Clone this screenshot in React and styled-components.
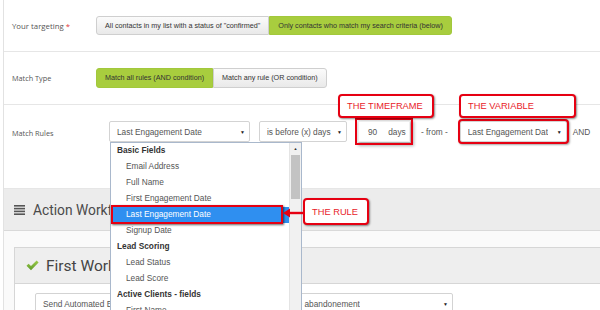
import styled, { createGlobalStyle } from 'styled-components';

const GlobalStyle = createGlobalStyle`
    html, body {
        margin: 0;
        padding: 0;
        background: #ffffff;
        font-family: 'Liberation Sans', Arial, sans-serif;
    }
`;

const basicFields = ['Email Address', 'Full Name', 'First Engagement Date', 'Last Engagement Date', 'Signup Date'];

function MenuIcon() {
    return (
        <svg width="11" height="10" viewBox="0 0 11 10">
            <rect x="0" y="0" width="11" height="1.6" fill="#555" />
            <rect x="0" y="2.8" width="11" height="1.6" fill="#555" />
            <rect x="0" y="5.6" width="11" height="1.6" fill="#555" />
            <rect x="0" y="8.4" width="11" height="1.6" fill="#555" />
        </svg>
    );
}

function CheckIcon() {
    return (
        <svg width="13" height="11" viewBox="0 0 13 11">
            <defs>
                <linearGradient id="chk" x1="0" y1="0" x2="0" y2="1">
                    <stop offset="0" stopColor="#9ccc4a" />
                    <stop offset="1" stopColor="#5f9a2a" />
                </linearGradient>
            </defs>
            <path d="M0.5 5.8 L2.6 3.8 L5 6.1 L10.6 0.6 L12.6 2.6 L5 10.2 Z" fill="url(#chk)" />
        </svg>
    );
}

function App() {
    return (
        <Screen>
            <GlobalStyle />
            <Content>
                <Row $h={52}>
                    <Label $w={84} $fs={7.8}>Your targeting <Req>*</Req></Label>
                    <Segmented>
                        <SegButton>All contacts in my list with a status of "confirmed"</SegButton>
                        <SegButton $active>Only contacts who match my search criteria (below)</SegButton>
                    </Segmented>
                </Row>

                <Row $h={53}>
                    <Label $w={84}>Match Type</Label>
                    <Segmented>
                        <SegButton $active $h={20}>Match all rules (AND condition)</SegButton>
                        <SegButton $h={20}>Match any rule (OR condition)</SegButton>
                    </Segmented>
                </Row>

                <Row $h={84} $top>
                    <Label $w={97} $pt={7}>Match Rules</Label>
                    <Select $w={141}>
                        <span>Last Engagement Date</span>
                        <Caret>▼</Caret>
                    </Select>
                    <Select $w={88} $ml={9}>
                        <span>is before (x) days</span>
                        <Caret>▼</Caret>
                    </Select>
                    <NumberBox>
                        <span>90</span>
                        <span>days</span>
                    </NumberBox>
                    <Joiner>- from -</Joiner>
                    <Select $w={107} $ml={12} $marked>
                        <span>Last Engagement Dat</span>
                        <Caret>▼</Caret>
                    </Select>
                    <Joiner $ml={6}>AND</Joiner>
                </Row>

                <SectionHead>
                    <MenuIcon />
                    <span>Action Workflows</span>
                </SectionHead>

                <PanelArea>
                    <Panel>
                        <PanelHead>
                            <CheckIcon />
                            <span>First Workflow</span>
                        </PanelHead>
                        <PanelBody>
                            <Select $w={418}>
                                <span>Send Automated Email: remind the visitor of his shopping cart after the abandonement</span>
                                <Caret>▼</Caret>
                            </Select>
                        </PanelBody>
                    </Panel>
                </PanelArea>
            </Content>

            <Dropdown>
                <Group>Basic Fields</Group>
                {basicFields.map((f) => (
                    <Option key={f} $selected={f === 'Last Engagement Date'}>{f}</Option>
                ))}
                <Group>Lead Scoring</Group>
                <Option>Lead Status</Option>
                <Option>Lead Score</Option>
                <Group>Active Clients - fields</Group>
                <Option>First Name</Option>
                <Scrollbar>
                    <ScrollArrow>▲</ScrollArrow>
                    <Thumb />
                </Scrollbar>
            </Dropdown>

            <Callout $x={338} $y={94} $w={96}>THE TIMEFRAME</Callout>
            <Callout $x={459} $y={94} $w={117}>THE VARIABLE</Callout>
            <Callout $x={303} $y={198} $w={66} $h={27}>THE RULE</Callout>
            <Arrow width="22" height="12" viewBox="0 0 22 12">
                <path d="M22 6 H7" stroke="#e60012" strokeWidth="2.4" />
                <path d="M1 6 L8 1.5 L8 10.5 Z" fill="#e60012" />
            </Arrow>
        </Screen>
    );
}

export default App;

const Screen = styled.div`
    position: relative;
    width: 600px;
    height: 310px;
    overflow: hidden;
    background: #ffffff;
`;

const Content = styled.div`
    margin-left: 3px;
    border-left: 1px solid #e2e2e2;
    width: 620px;
`;

const Row = styled.div`
    box-sizing: border-box;
    height: ${(p) => p.$h}px;
    display: flex;
    align-items: ${(p) => (p.$top ? 'flex-start' : 'center')};
    padding: ${(p) => (p.$top ? '16px 0 0 8px' : '0 0 0 8px')};
    border-bottom: 1px solid #e6e6e6;
`;

const Label = styled.div`
    width: ${(p) => p.$w}px;
    flex-shrink: 0;
    padding-top: ${(p) => p.$pt || 0}px;
    font-family: 'Open Sans', sans-serif;
    font-size: ${(p) => p.$fs || 7.3}px;
    color: #555555;
`;

const Req = styled.span`
    color: #e0383b;
`;

const Segmented = styled.div`
    display: flex;
    margin-top: -1px;
`;

const SegButton = styled.div`
    box-sizing: border-box;
    height: ${(p) => p.$h || 19}px;
    display: flex;
    align-items: center;
    padding: 0 8px;
    font-size: 7.2px;
    color: #333333;
    border: 1px solid ${(p) => (p.$active ? '#a2c83c' : '#cfcfcf')};
    background: ${(p) => (p.$active ? '#a8cd3e' : 'linear-gradient(#fbfbfb, #e9e9e9)')};

    &:first-child {
        border-radius: 3px 0 0 3px;
    }

    &:last-child {
        border-radius: 0 3px 3px 0;
    }
`;

const Select = styled.div`
    box-sizing: border-box;
    width: ${(p) => p.$w}px;
    height: 21px;
    margin-left: ${(p) => p.$ml || 0}px;
    flex-shrink: 0;
    display: flex;
    align-items: center;
    justify-content: space-between;
    padding: 0 4px 0 7px;
    font-size: 8.3px;
    color: #555555;
    background: #ffffff;
    border: 1px solid #d3d3d3;
    border-radius: 2px;
    outline: ${(p) => (p.$marked ? '2px solid #e60012' : 'none')};
    box-shadow: ${(p) => (p.$marked ? '1px 1px 2px 2px rgba(0, 0, 0, 0.35)' : 'none')};

    span {
        white-space: nowrap;
        overflow: hidden;
    }
`;

const Caret = styled.i`
    font-style: normal;
    font-size: 5px;
    color: #222222;
    margin-left: 3px;
`;

const NumberBox = styled.div`
    box-sizing: border-box;
    width: 52px;
    height: 21px;
    margin-left: 11px;
    display: flex;
    align-items: center;
    gap: 11px;
    padding-left: 9px;
    font-size: 8.3px;
    color: #555555;
    border: 1px solid #eeeeee;
    outline: 2px solid #e60012;
    outline-offset: 1px;
    box-shadow: 2px 2px 3px 2px rgba(0, 0, 0, 0.3);
`;

const Joiner = styled.div`
    height: 21px;
    display: flex;
    align-items: center;
    margin-left: ${(p) => p.$ml || 11}px;
    font-size: 8.3px;
    color: #555555;
    white-space: nowrap;
`;

const SectionHead = styled.div`
    box-sizing: border-box;
    height: 42px;
    display: flex;
    align-items: center;
    gap: 8px;
    padding-left: 10px;
    background: #ececec;
    border-bottom: 1px solid #d9d9d9;
    font-family: Roboto, sans-serif;
    font-size: 13.8px;
    color: #4a4a4a;
    white-space: nowrap;
`;

const PanelArea = styled.div`
    padding: 16px 0 0 10px;
    background: #fafafa;
`;

const Panel = styled.div`
    border: 1px solid #d6d6d6;
    background: #ffffff;
`;

const PanelHead = styled.div`
    box-sizing: border-box;
    height: 36px;
    display: flex;
    align-items: center;
    gap: 7px;
    padding-left: 11px;
    background: #eeeeee;
    border-bottom: 1px solid #d6d6d6;
    font-family: Roboto, sans-serif;
    font-size: 15.5px;
    color: #444444;
    white-space: nowrap;
`;

const PanelBody = styled.div`
    height: 40px;
    padding: 9px 0 0 20px;
`;

const Dropdown = styled.div`
    position: absolute;
    left: 110px;
    top: 142px;
    width: 192px;
    height: 190px;
    box-sizing: border-box;
    padding-right: 11px;
    background: #ffffff;
    border: 1px solid #a9b8cc;
    font-size: 8.3px;
    color: #555555;
`;

const Group = styled.div`
    height: 16px;
    line-height: 15px;
    padding-left: 6px;
    font-weight: bold;
    color: #333333;
`;

const Option = styled.div`
    position: relative;
    height: 16px;
    line-height: 15px;
    padding-left: 15px;
    background: ${(p) => (p.$selected ? '#2f8ff0' : 'transparent')};
    color: ${(p) => (p.$selected ? '#ffffff' : '#555555')};

    &::after {
        content: '';
        display: ${(p) => (p.$selected ? 'block' : 'none')};
        position: absolute;
        left: 0;
        top: -2px;
        width: 172px;
        height: 19px;
        box-sizing: border-box;
        border: 2px solid #e60012;
        box-shadow: 1px 1px 2px rgba(0, 0, 0, 0.6);
    }
`;

const Scrollbar = styled.div`
    position: absolute;
    top: 0;
    right: 0;
    width: 11px;
    height: 100%;
    background: #f1f1f1;
    border-left: 1px solid #e4e4e4;
`;

const ScrollArrow = styled.div`
    height: 12px;
    text-align: center;
    font-size: 4px;
    line-height: 12px;
    color: #333333;
`;

const Thumb = styled.div`
    margin: 0 1px;
    height: 44px;
    background: #c3c3c3;
`;

const Callout = styled.div`
    position: absolute;
    left: ${(p) => p.$x}px;
    top: ${(p) => p.$y}px;
    width: ${(p) => p.$w}px;
    height: ${(p) => p.$h || 24}px;
    box-sizing: border-box;
    display: flex;
    align-items: center;
    padding-left: 7px;
    background: #ffffff;
    border: 2px solid #e60012;
    border-radius: 4px;
    box-shadow: 1px 1px 2px rgba(0, 0, 0, 0.45);
    font-family: 'Liberation Sans', sans-serif;
    font-size: 9.3px;
    color: #e8222a;
    white-space: nowrap;
`;

const Arrow = styled.svg`
    position: absolute;
    left: 282px;
    top: 207px;
`;
